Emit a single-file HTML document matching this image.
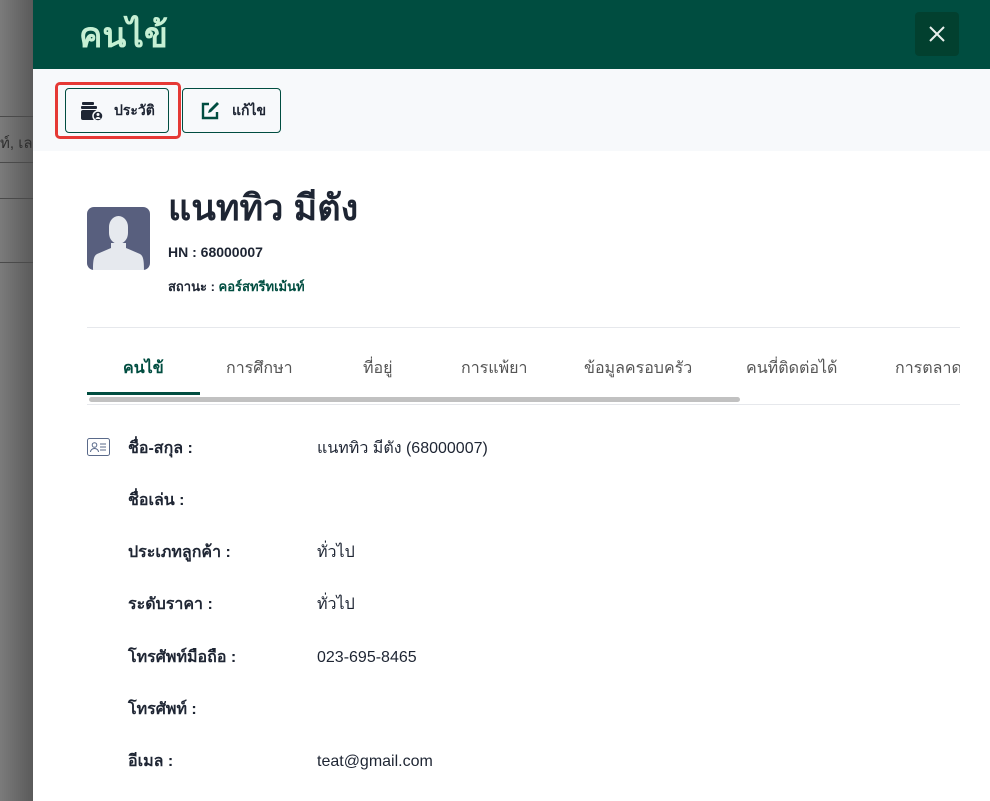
<!DOCTYPE html>
<html><head><meta charset="utf-8">
<style>
*{margin:0;padding:0;box-sizing:border-box}
body{width:990px;height:801px;overflow:hidden;position:relative;font-family:"Liberation Sans","Noto Sans CJK SC",sans-serif;background:#fff;color:#1e2533}
.bd{position:absolute;left:0;top:0;width:33px;height:801px;background:linear-gradient(90deg,#7b7b7b,#5a5a5a)}
.bd .l{position:absolute;left:0;width:33px;height:1px;background:#4a4a4a}
.bd .t{position:absolute;left:0;top:131px;font-size:15px;color:#2e2e2e;white-space:nowrap}
.pn{position:absolute;left:33px;top:0;width:957px;height:801px;background:#fff}
.hd{height:69px;background:#004d40;position:relative}
.hd h1{position:absolute;left:46px;top:14px;font-size:35px;font-weight:700;color:#c6f0d4;line-height:44px}
.cl{position:absolute;left:882px;top:12px;width:44px;height:44px;background:#02402f;border-radius:4px}
.tb{height:82px;background:#f7f9fb;position:relative}
.btn{position:absolute;top:19px;height:45px;border:1px solid #004d40;border-radius:4px;background:#f7f9fb;font-size:14px;font-weight:700;color:#1e2533;display:flex;align-items:center}
.hl{position:absolute;left:22px;top:13px;width:126px;height:57px;border:3px solid #e53935;border-radius:5px}
.av{position:absolute;left:54px;top:207px;width:63px;height:63px;border-radius:7px;background:#585f7e;overflow:hidden}
.nm{position:absolute;left:135px;top:186px;font-size:36px;font-weight:700;line-height:44px}
.hn{position:absolute;left:135px;top:244px;font-size:14px;font-weight:700}
.st{position:absolute;left:135px;top:276px;font-size:13px;font-weight:700}
.st span{color:#004d40}
.sep{position:absolute;left:54px;top:327px;width:873px;height:1px;background:#e6e8ec}
.tabw{position:absolute;left:54px;top:353px;width:873px;height:30px;overflow:hidden}
.tabs{position:absolute;left:0;top:3px;font-size:16px;color:#555;white-space:nowrap}
.tabs span{position:absolute;top:0}
.ind{position:absolute;left:54px;top:392px;width:113px;height:3px;background:#004d40}
.sb{position:absolute;left:56px;top:397px;width:651px;height:5px;border-radius:3px;background:#c1c1c1}
.sep2{position:absolute;left:54px;top:404px;width:873px;height:1px;background:#e6e8ec}
.row{position:absolute;font-size:16px;white-space:nowrap}
.k{left:95px;font-weight:700;margin-top:-3px}
.v{left:284px}
.th{margin-top:-3px}
</style></head><body>
<div class="bd">
<div class="l" style="top:116px"></div><div class="l" style="top:162px"></div><div class="l" style="top:198px"></div><div class="l" style="top:262px"></div>
<div class="t">ท์, เล</div>
</div>
<div class="pn">
<div class="hd"><h1>คนไข้</h1>
<div class="cl"><svg width="44" height="44" viewBox="0 0 44 44"><path d="M15 15L29 29M29 15L15 29" stroke="#e8f0ec" stroke-width="2"/></svg></div></div>
<div class="tb">
<div class="hl"></div>
<div class="btn" style="left:32px;width:104px"><svg style="margin:0 10px 0 14px" width="24" height="20" viewBox="0 0 24 20"><rect x="2" y="1" width="12" height="3" rx="1" fill="#1e2533"/><rect x="1" y="5" width="16" height="3" rx="1" fill="#1e2533"/><rect x="1" y="9" width="16" height="10" rx="2" fill="#1e2533"/><circle cx="18" cy="15" r="5" fill="#1e2533" stroke="#f7f9fb" stroke-width="1.5"/><circle cx="18" cy="13.5" r="1.5" fill="#f7f9fb"/><path d="M15.5 18a2.5 2 0 0 1 5 0z" fill="#f7f9fb"/></svg>ประวัติ</div>
<div class="btn" style="left:149px;width:99px"><svg style="margin:0 12px 0 17px" width="20" height="20" viewBox="0 0 20 20"><path d="M9 3H3v14h14v-6" fill="none" stroke="#004d40" stroke-width="2.4"/><path d="M8 12l1-3 8-8 2 2-8 8z" fill="#004d40"/></svg>แก้ไข</div>
</div>
<div class="av"><svg width="63" height="63" viewBox="0 0 63 63"><path d="M22 20a9.5 11 0 0 1 19 0v6a9.5 11 0 0 1-19 0z" fill="#e6e9ee"/><path d="M24 36h15v5l14 6c3 2 4 5 4 16H6c0-11 1-14 4-16l14-6z" fill="#e6e9ee"/></svg></div>
<div class="nm">แนททิว มีตัง</div>
<div class="hn">HN : 68000007</div>
<div class="st">สถานะ : <span>คอร์สทรีทเม้นท์</span></div>
<div class="sep"></div>
<div class="tabw"><div class="tabs">
<span style="left:36px;color:#004d40;font-weight:700">คนไข้</span>
<span style="left:139px">การศึกษา</span>
<span style="left:276px">ที่อยู่</span>
<span style="left:374px">การแพ้ยา</span>
<span style="left:497px">ข้อมูลครอบครัว</span>
<span style="left:659px">คนที่ติดต่อได้</span>
<span style="left:808px">การตลาด</span>
</div></div>
<div class="ind"></div><div class="sb"></div><div class="sep2"></div>
<svg style="position:absolute;left:54px;top:438px" width="23" height="18" viewBox="0 0 23 18"><rect x="0.5" y="0.5" width="22" height="17" rx="2" fill="none" stroke="#5a6a8a"/><circle cx="7.5" cy="7" r="2.3" fill="none" stroke="#5a6a8a"/><path d="M3.5 14a4 3.5 0 0 1 8 0" fill="none" stroke="#5a6a8a"/><path d="M13 6h6M13 9h6M13 12h6" stroke="#5a6a8a"/></svg>
<div class="row k" style="top:439px">ชื่อ-สกุล :</div><div class="row v th" style="top:439px">แนททิว มีตัง (68000007)</div>
<div class="row k" style="top:491px">ชื่อเล่น :</div>
<div class="row k" style="top:543px">ประเภทลูกค้า :</div><div class="row v th" style="top:543px">ทั่วไป</div>
<div class="row k" style="top:595px">ระดับราคา :</div><div class="row v th" style="top:595px">ทั่วไป</div>
<div class="row k" style="top:648px">โทรศัพท์มือถือ :</div><div class="row v" style="top:649px">023-695-8465</div>
<div class="row k" style="top:700px">โทรศัพท์ :</div>
<div class="row k" style="top:752px">อีเมล :</div><div class="row v" style="top:753px">teat@gmail.com</div>
</div>
</body></html>
